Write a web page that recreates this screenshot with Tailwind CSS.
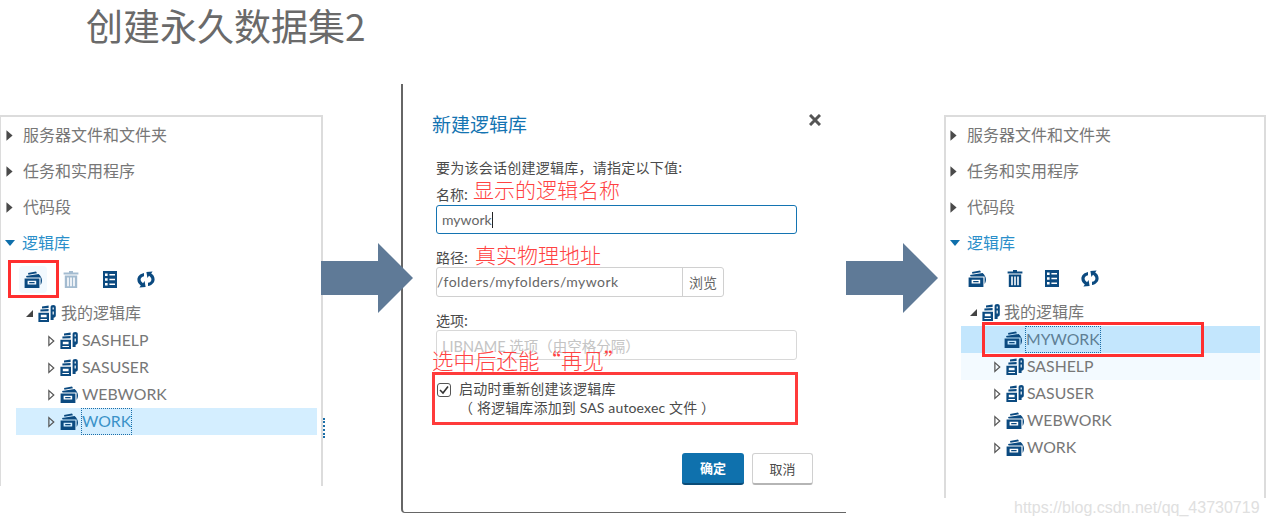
<!DOCTYPE html>
<html lang="zh-CN">
<head>
    <meta charset="UTF-8">
    <title>创建永久数据集2</title>
    <script src="https://cdn.jsdelivr.net/npm/@tailwindcss/browser@4"></script>
</head>
<body class="bg-white">
    <!-- shared icons -->
    <svg class="hidden" width="0" height="0">
        <symbol id="drawer" viewBox="0 0 18 17">
            <path fill="currentColor" d="M4 2 12 0.4 13 2.2 4.4 3.8Z"/>
            <path fill="currentColor" d="M2 5 14.6 3C16.8 5 18 7.2 18 9.6 18 11.4 17.4 12.8 16.6 14V6.4L2.6 6.6Z"/>
            <path fill="currentColor" fill-rule="evenodd" d="M0.6 7.6H15.4V17H0.6ZM3.6 9.8V13.4H12.2V9.8ZM5.2 11H10.6V12.2H5.2Z"/>
        </symbol>
        <symbol id="lib" viewBox="0 0 18 17">
            <path fill="currentColor" d="M4 1.4 10.6 0.6V3L4 3.4Z"/>
            <path fill="currentColor" d="M2.4 4.6 10.6 4V6.2L2.4 6.6Z"/>
            <path fill="currentColor" fill-rule="evenodd" d="M0.4 7.8H11V17H0.4ZM2.8 9.8V12.2H8.6V9.8ZM2.4 14V15H9V14Z"/>
            <path fill="currentColor" fill-rule="evenodd" d="M12.6 2.4C12.6 0.8 13.6 0 15.2 0 16.8 0 17.8 0.8 17.8 2.4V10.6C17.8 12 16.8 12.6 15.6 12.8V15H12.6ZM14.6 2.4V4.6H15.8V2.4ZM14.6 6.6V9.6H15.8V6.6Z"/>
        </symbol>
        <symbol id="trash" viewBox="0 0 16 17">
            <path fill="currentColor" fill-rule="evenodd" d="M6 0H10V1.6H15.4V3.6H0.6V1.6H6ZM1.8 4.6H14.2V17H1.8ZM4.2 6.4V15.2H5.8V6.4ZM7.2 6.4V15.2H8.8V6.4ZM10.2 6.4V15.2H11.8V6.4Z"/>
        </symbol>
        <symbol id="list" viewBox="0 0 14 17">
            <path fill="currentColor" fill-rule="evenodd" d="M0 0H14V17H0ZM2 2.4V5H4.6V2.4ZM6.4 3V4.4H12V3ZM2 7.2V9.8H4.6V7.2ZM6.4 7.8V9.2H12V7.8ZM2 12V14.6H4.6V12ZM6.4 12.6V14H12V12.6Z"/>
        </symbol>
        <symbol id="sync" viewBox="0 0 18 17">
            <path fill="currentColor" d="M7 2C3 2.8 0.4 5.4 0.4 8.8 0.4 11.2 1.8 13.2 3.8 14.4L2.4 16.6 8.6 16 7.6 10 6 12.2C4.6 11.2 3.6 10 3.6 8.6 3.6 7 5 5.6 7 5.2Z"/>
            <path fill="currentColor" transform="rotate(180 9 8.5)" d="M7 2C3 2.8 0.4 5.4 0.4 8.8 0.4 11.2 1.8 13.2 3.8 14.4L2.4 16.6 8.6 16 7.6 10 6 12.2C4.6 11.2 3.6 10 3.6 8.6 3.6 7 5 5.6 7 5.2Z"/>
        </symbol>
        <symbol id="open" viewBox="0 0 8 12">
            <path fill="none" stroke="#555" stroke-width="1.4" d="M1 1 6.6 6 1 11Z"/>
        </symbol>
        <symbol id="closed" viewBox="0 0 8 12">
            <path fill="#4a4a4a" d="M0.5 0 7.5 6 0.5 12Z"/>
        </symbol>
    </svg>

    <main class="relative w-[1267px] h-[527px] overflow-hidden bg-white font-['Lato','Noto_Sans_CJK_SC',sans-serif]">
        <h1 class="absolute left-[86px] top-[0px] text-[37px] leading-[50px] text-[#6a6a6a] font-normal font-['Noto_Sans_CJK_SC',sans-serif]">创建永久数据集2</h1>

        <!-- left panel -->
        <section class="absolute left-0 top-[115px] w-[323px] h-[371px] border-t-2 border-r-2 border-l border-[#dcdcdc] pl-[4px] text-[16px] text-[#777]">
            <div class="flex items-center h-[36px]"><svg class="w-[7px] h-[11px] mr-[10px] ml-[1px]"><use href="#closed"/></svg>服务器文件和文件夹</div>
            <div class="flex items-center h-[36px]"><svg class="w-[7px] h-[11px] mr-[10px] ml-[1px]"><use href="#closed"/></svg>任务和实用程序</div>
            <div class="flex items-center h-[36px]"><svg class="w-[7px] h-[11px] mr-[10px] ml-[1px]"><use href="#closed"/></svg>代码段</div>
            <div class="flex items-center h-[36px] text-[#2b8fca]"><span class="w-0 h-0 mr-[7px] border-x-[5px] border-t-[6px] border-x-transparent border-t-[#0f6fab]"></span>逻辑库</div>
            <div class="flex items-center h-[37px] mb-[2px] pl-[14px] text-[#0b4a80]">
                <span class="flex items-center justify-center w-[28px] h-[27px] rounded bg-[#f2f9fe]"><svg class="w-[18px] h-[17px]"><use href="#drawer"/></svg></span>
                <svg class="w-[16px] h-[17px] ml-[16px] text-[#a3bbd0]"><use href="#trash"/></svg>
                <svg class="w-[14px] h-[17px] ml-[24px]"><use href="#list"/></svg>
                <svg class="w-[18px] h-[17px] ml-[20px]"><use href="#sync"/></svg>
            </div>
            <div class="flex items-center h-[27px] pl-[21px]"><span class="w-0 h-0 mr-[5px] border-b-[7px] border-l-[7px] border-b-[#444] border-l-transparent"></span><svg class="w-[18px] h-[17px] mr-[5px] text-[#0b4a80]"><use href="#lib"/></svg><span class="pb-[2px]">我的逻辑库</span></div>
            <div class="flex items-center h-[27px] pl-[43px]"><svg class="w-[7px] h-[12px] mr-[5px]"><use href="#open"/></svg><svg class="w-[18px] h-[17px] mr-[4px] text-[#0b4a80]"><use href="#lib"/></svg><span class="pb-[2px] text-[15.8px]">SASHELP</span></div>
            <div class="flex items-center h-[27px] pl-[43px]"><svg class="w-[7px] h-[12px] mr-[5px]"><use href="#open"/></svg><svg class="w-[18px] h-[17px] mr-[4px] text-[#0b4a80]"><use href="#lib"/></svg><span class="pb-[2px] text-[15.8px]">SASUSER</span></div>
            <div class="flex items-center h-[27px] pl-[43px]"><svg class="w-[7px] h-[12px] mr-[5px]"><use href="#open"/></svg><svg class="w-[18px] h-[17px] mr-[4px] text-[#0b4a80]"><use href="#drawer"/></svg><span class="pb-[2px] text-[15.8px]">WEBWORK</span></div>
            <div class="flex items-center h-[27px] ml-[11px] mr-[4px] pl-[32px] bg-[#d4eeff]"><svg class="w-[7px] h-[12px] mr-[5px]"><use href="#open"/></svg><svg class="w-[18px] h-[17px] mr-[3px] text-[#0b4a80]"><use href="#drawer"/></svg><span class="flex items-center h-full pb-[2px] border border-dotted border-[#1a6ea8] text-[15.8px] text-[#3a92c8]">WORK</span></div>
        </section>
        <div class="absolute left-[323px] top-[418px] h-[20px] border-l-2 border-dotted border-[#1a6ea8]"></div>
        <div class="absolute left-[8px] top-[260px] w-[51px] h-[38px] border-[3px] border-[#ff2f2f]"></div>

        <!-- dialog -->
        <section class="absolute left-[401px] top-[84px] w-[445px] h-[429px] border-l-2 border-b border-[#666] rounded-bl-sm bg-white pl-[33px] text-[14px] text-[#4a4a4a] font-['Noto_Sans_CJK_SC',sans-serif]">
            <div class="relative h-[71px] pt-[27px] -ml-[4px] text-[19px] leading-[26px] text-[#1474b2]">新建逻辑库
                <svg class="absolute left-[377px] top-[30px] w-[12px] h-[12px]" viewBox="0 0 12 12"><path stroke="#555" stroke-width="3" d="M1 1 11 11M11 1 1 11"/></svg>
            </div>
            <p class="h-[24px] leading-[24px] tracking-[0.25px]">要为该会话创建逻辑库，请指定以下值:</p>
            <div class="flex items-center h-[26px]"><span class="pt-[5px]">名称:</span><span class="ml-[5px] -mt-[4px] text-[21px] font-light text-[#ff4242]">显示的逻辑名称</span></div>
            <div class="flex items-center w-[361px] h-[29px] pl-[5px] border border-[#1474b2] rounded-[3px] font-['Lato',sans-serif] text-[14px] text-[#666]">mywork<span class="w-px h-[16px] bg-[#222]"></span></div>
            <div class="flex items-center h-[33px]"><span class="pt-[14px]">路径:</span><span class="ml-[7px] pt-[8px] text-[21px] font-light text-[#ff4242]">真实物理地址</span></div>
            <div class="flex w-[288px] h-[30px] border border-[#d0d0d0] rounded-[3px] font-['Lato',sans-serif] text-[14px] text-[#666]">
                <span class="flex items-center flex-1 pb-[2px] tracking-[0.43px]">/folders/myfolders/mywork</span>
                <span class="flex items-center justify-center w-[41px] border-l border-[#d0d0d0] font-['Noto_Sans_CJK_SC',sans-serif] text-[14px]">浏览</span>
            </div>
            <p class="h-[33px] pt-[11px] leading-[24px]">选项:</p>
            <div class="flex items-center w-[361px] h-[30px] pl-[5px] pt-[4px] border border-[#d8d8d8] rounded-[3px] text-[#c4c4c4] text-[14.5px] font-['Lato','Noto_Sans_CJK_SC',sans-serif]">LIBNAME 选项（由空格分隔）</div>
            <!-- annotation sits on the lower part of the options field, as in the slide -->
            <p class="relative -mt-[15px] -ml-[4px] h-[30px] text-[21.5px] leading-[30px] whitespace-nowrap font-light text-[#ff4242]">选中后还能“再见”</p>
            <div class="flex mt-[7px] pl-[1px]">
                <span class="flex items-center justify-center w-[14px] h-[14px] mt-[1px] border border-[#555] rounded-[3px]"><svg class="w-[10px] h-[10px]" viewBox="0 0 10 10"><path fill="none" stroke="#333" stroke-width="1.6" d="M1 5 4 8 9 1.5"/></svg></span>
                <div class="ml-[8px] -mt-[3px] mb-[3px] text-[14px] leading-[19px]">
                    <p class="tracking-[0.25px]">启动时重新创建该逻辑库</p>
                    <p class="tracking-[0.15px] font-['Lato','Noto_Sans_CJK_SC',sans-serif]">（ 将逻辑库添加到 SAS autoexec 文件 ）</p>
                </div>
            </div>
            <div class="flex mt-[33px] ml-[246px] gap-[8px] text-[13px]">
                <button class="w-[62px] h-[32px] rounded-[3px] border-b-2 border-[#0a4c78] bg-[#0f71ad] font-bold text-white">确定</button>
                <button class="w-[61px] h-[32px] rounded-[3px] border border-b-2 border-[#d0d0d0] border-b-[#b5b5b5] bg-white text-[#4a4a4a]">取消</button>
            </div>
        </section>
        <div class="absolute left-[432px] top-[372px] w-[366px] h-[53px] border-[3px] border-[#ff3b3b]"></div>

        <!-- arrows -->
        <svg class="absolute left-[321px] top-[243px] w-[92px] h-[70px]" viewBox="0 0 92 70"><path fill="#5f7a97" d="M0 18H57V0L92 35 57 70V52H0Z"/></svg>
        <svg class="absolute left-[846px] top-[243px] w-[92px] h-[70px]" viewBox="0 0 92 70"><path fill="#5f7a97" d="M0 18H57V0L92 35 57 70V52H0Z"/></svg>

        <!-- right panel -->
        <section class="absolute left-[944px] top-[115px] w-[322px] h-[383px] border-t-2 border-r-2 border-l-2 border-[#dcdcdc] pl-[4px] text-[16px] text-[#777]">
            <div class="flex items-center h-[36px]"><svg class="w-[7px] h-[11px] mr-[10px]"><use href="#closed"/></svg>服务器文件和文件夹</div>
            <div class="flex items-center h-[36px]"><svg class="w-[7px] h-[11px] mr-[10px]"><use href="#closed"/></svg>任务和实用程序</div>
            <div class="flex items-center h-[36px]"><svg class="w-[7px] h-[11px] mr-[10px]"><use href="#closed"/></svg>代码段</div>
            <div class="flex items-center h-[35px] text-[#2b8fca]"><span class="w-0 h-0 mr-[7px] border-x-[5px] border-t-[6px] border-x-transparent border-t-[#0f6fab]"></span>逻辑库</div>
            <div class="flex items-center h-[37px] mb-[2px] pl-[18px] gap-[21px] text-[#0b4a80]">
                <svg class="w-[18px] h-[17px]"><use href="#drawer"/></svg>
                <svg class="w-[16px] h-[17px]"><use href="#trash"/></svg>
                <svg class="w-[14px] h-[17px] ml-[1px]"><use href="#list"/></svg>
                <svg class="w-[18px] h-[17px] ml-[1px]"><use href="#sync"/></svg>
            </div>
            <div class="flex items-center h-[27px] pl-[20px]"><span class="w-0 h-0 mr-[5px] border-b-[7px] border-l-[7px] border-b-[#444] border-l-transparent"></span><svg class="w-[18px] h-[17px] mr-[4px] text-[#0b4a80]"><use href="#lib"/></svg><span class="pb-[2px]">我的逻辑库</span></div>
            <div class="flex items-center h-[27px] ml-[11px] mr-[4px] pl-[43px] bg-[#c3e6fd]"><svg class="w-[18px] h-[17px] mr-[3px] text-[#0b4a80]"><use href="#drawer"/></svg><span class="flex items-center h-full pb-[2px] border border-dotted border-[#1a6ea8] text-[15.8px] text-[#5f7f95]">MYWORK</span></div>
            <div class="flex items-center h-[27px] ml-[11px] mr-[4px] pl-[33px] bg-[#f3faff]"><svg class="w-[7px] h-[12px] mr-[5px]"><use href="#open"/></svg><svg class="w-[18px] h-[17px] mr-[3px] text-[#0b4a80]"><use href="#lib"/></svg><span class="pb-[2px] text-[15.8px]">SASHELP</span></div>
            <div class="flex items-center h-[27px] pl-[44px]"><svg class="w-[7px] h-[12px] mr-[5px]"><use href="#open"/></svg><svg class="w-[18px] h-[17px] mr-[3px] text-[#0b4a80]"><use href="#lib"/></svg><span class="pb-[2px] text-[15.8px]">SASUSER</span></div>
            <div class="flex items-center h-[27px] pl-[44px]"><svg class="w-[7px] h-[12px] mr-[5px]"><use href="#open"/></svg><svg class="w-[18px] h-[17px] mr-[3px] text-[#0b4a80]"><use href="#drawer"/></svg><span class="pb-[2px] text-[15.8px]">WEBWORK</span></div>
            <div class="flex items-center h-[27px] pl-[44px]"><svg class="w-[7px] h-[12px] mr-[5px]"><use href="#open"/></svg><svg class="w-[18px] h-[17px] mr-[3px] text-[#0b4a80]"><use href="#drawer"/></svg><span class="pb-[2px] text-[15.8px]">WORK</span></div>
        </section>
        <div class="absolute left-[982px] top-[322px] w-[222px] h-[35px] border-[3px] border-[#ff2f2f]"></div>

        <!-- watermark -->
        <span class="absolute left-[1014px] top-[499px] text-[16px] leading-[18px] text-[#e0e0e0] font-['Liberation_Sans',sans-serif]">https://blog.csdn.net/qq_43730719</span>
    </main>
</body>
</html>
